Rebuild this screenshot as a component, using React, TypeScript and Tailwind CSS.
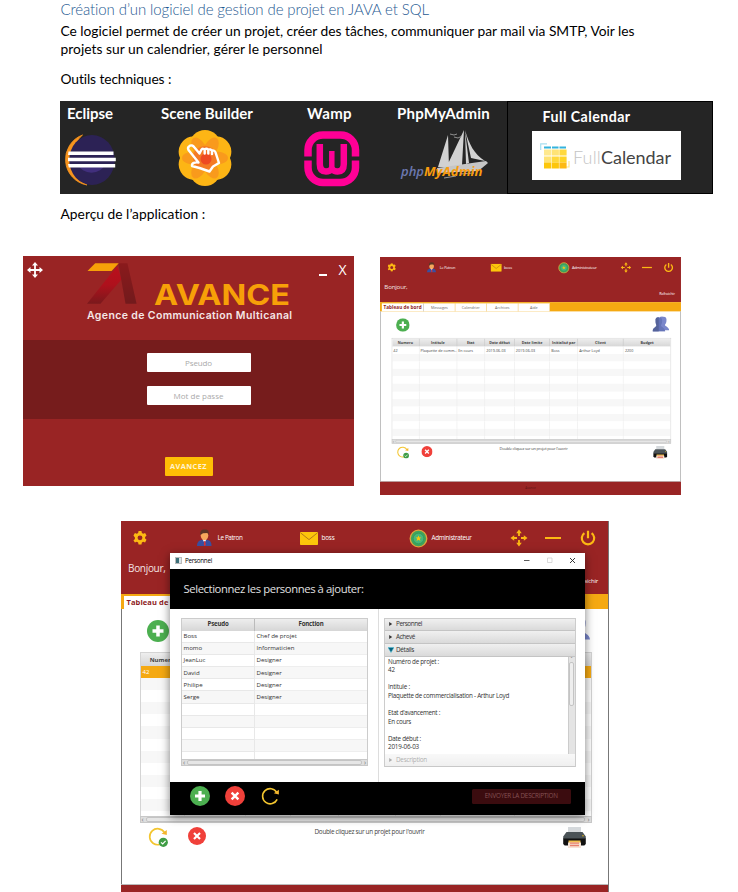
import { useLayoutEffect, useRef, useState, type ReactNode } from "react";
import clsx from "clsx";

const HUM = "font-['Lato','Liberation_Sans',sans-serif]";
const UI = "font-['Open_Sans','Noto_Sans',sans-serif]";

/* One line of text whose letter spacing is adjusted so it spans `w` pixels. */
function Fit({ w, className, children }: { w: number; className?: string; children: string }) {
  const ref = useRef<HTMLSpanElement>(null);
  const [gap, setGap] = useState(0);
  useLayoutEffect(() => {
    const el = ref.current;
    if (!el) return;
    el.style.letterSpacing = "0px";
    const natural = parseFloat(getComputedStyle(el).width);
    const next = (w - natural) / children.length;
    el.style.letterSpacing = `${next}px`;
    setGap(next);
  }, [w, children]);
  return (
    <span ref={ref} className={clsx("inline-block whitespace-nowrap leading-none", className)} style={{ letterSpacing: `${gap}px` }}>
      {children}
    </span>
  );
}

function Eclipse() {
  return (
    <svg width="52" height="52" viewBox="0 0 52 52">
      <path d="M17.500 1A26 26 0 0 0 22 51A31 31 0 0 1 17.500 1Z" fill="#f7941e" stroke="#f7941e" strokeWidth=".8" />
      <ellipse cx="27" cy="26" rx="22.800" ry="25" fill="#2c2255" />
      <path d="M13 30h27a14 12 0 0 1-27 0Z" fill="#412f7d" />
      <path d="M3.500 17.600h45v3.400H3zM3 23.800h47.800v3.400H3zM3 30h47.200v3.400H3.800z" fill="#fff" />
    </svg>
  );
}

function SceneBuilder() {
  const petals = [0, 60, 120, 180, 240, 300];
  return (
    <svg width="56" height="56" viewBox="0 0 56 56">
      {petals.map((a) => (
        <circle key={a} cx="28" cy="15.500" r="15.500" fill="#fdb515" transform={`rotate(${a} 28 28)`} />
      ))}
      {petals.map((a) => (
        <ellipse key={a} cx="28" cy="16.500" rx="6.500" ry="11.500" fill="#f7941e" opacity=".8" transform={`rotate(${a + 30} 28 28)`} />
      ))}
      <circle cx="28" cy="28" r="12" fill="#f47a25" />
      <circle cx="29" cy="29" r="5.500" fill="#ee4a23" />
      <path
        d="M12 16.500c2-2 4-1 5.500 1l5 6 2-4c1-1 2.500-.8 3.200 0 1-1 3-1 3.600.3 1.200-.8 3-.3 3.700.9 1.500-.6 3 .2 3.500 1.600L42 33l-6 3.500-3.500 5-10-3.500-7.500-2c-.5-3 3-4 6.500-3.500L11.500 20c-.8-1.500-.5-2.700.5-3.500ZM27.700 19.500v4M31.300 20v3.500M35 21v3"
        fill="none"
        stroke="#fff"
        strokeWidth="2.400"
        strokeLinejoin="round"
        strokeLinecap="round"
      />
    </svg>
  );
}

function Wamp() {
  return (
    <svg width="56" height="56" viewBox="0 0 56 56">
      <rect x="4" y="4" width="47.500" height="47.500" rx="15" fill="none" stroke="#ff0096" strokeWidth="7.500" />
      <path d="M0 25.500h9v4H0zM46 25.500h10v4H46z" fill="#252525" />
      <path d="M15.800 13v20c0 6 3 7.500 6.200 7.500 2.400 0 4.400-.8 5.800-2.500 1.400 1.700 3.400 2.500 5.800 2.500 3.200 0 6.200-1.500 6.200-7.500V13" fill="none" stroke="#ff0096" strokeWidth="6.500" />
      <path d="M27.800 20v19" stroke="#ff0096" strokeWidth="5.500" />
    </svg>
  );
}

function PhpMyAdmin() {
  return (
    <svg width="90" height="56" viewBox="0 0 90 56">
      <path d="M48 10L38 42h11zM64 5L46 43l16-3zM65 6l1 33 3-1zM65 5c4 14 9 24 20 31l-14-3z" fill="#d2d2d2" />
      <path d="M37 43l49-7 2 2-6 5-4 3-40 2z" fill="#c6c6c6" />
      <path d="M50 9l4 1 3-1M54 12l4 1 4-2" stroke="#aaa" fill="none" strokeWidth=".8" />
      <path d="M60 49l14-1M44 53l12-2" stroke="#999" strokeWidth="1" />
      <text x="1" y="50.500" textLength="23" lengthAdjust="spacingAndGlyphs" fontFamily="Open Sans" fontSize="13" fontStyle="italic" fontWeight="600" fill="#6c78af">php</text>
      <text x="24" y="50.500" textLength="58.500" lengthAdjust="spacingAndGlyphs" fontFamily="Open Sans" fontSize="13" fontStyle="italic" fontWeight="700" fill="#f89c0e">MyAdmin</text>
    </svg>
  );
}

function CalendarLogo() {
  const rows = [
    { y: 6, c: ["#ffe98f", "#ffe375", "#ffd93f"] },
    { y: 13, c: ["#ffe375", "#ffd83a", "#ffd426"] },
    { y: 19, c: ["#fdc70c", "#fdc60b", "#fdb913"] },
  ];
  return (
    <svg width="31" height="26" viewBox="0 0 31 26">
      <path d="M.7 7V.9H7" fill="none" stroke="#a9dff0" strokeWidth="1.200" />
      <path d="M29 18v6h-6" fill="none" stroke="#ffe48a" strokeWidth="1.200" />
      <path d="M4 3.500h7v2H4zM12 3.500h6.500v2H12zM19.500 3.500H26v2h-6.500z" fill="#35b4dd" />
      {rows.map((r) => r.c.map((c, i) => <rect key={c} x={4 + i * 7.7} y={r.y + 0.5} width="7.200" height="6" fill={c} />))}
    </svg>
  );
}

function AvanceLogo() {
  return (
    <svg width="54" height="46" viewBox="0 0 54 46">
      <defs>
        <linearGradient id="legLeft" x1="0" y1="0" x2="0" y2="1">
          <stop offset="0" stopColor="#bb0f1c" />
          <stop offset=".5" stopColor="#ae111c" />
          <stop offset="1" stopColor="#7a191c" />
        </linearGradient>
        <linearGradient id="legRight" x1="0" y1="0" x2="0" y2="1">
          <stop offset="0" stopColor="#8a1a1c" />
          <stop offset="1" stopColor="#721a1c" />
        </linearGradient>
      </defs>
      <path d="M31.500 3.500L36 17 14 42.500H0L25 11z" fill="url(#legLeft)" />
      <path d="M32.500.5H42L51.500 42.500H40z" fill="url(#legRight)" />
      <path d="M8.500.5H33L25.500 8.500H.5z" fill="#f7a008" />
    </svg>
  );
}

function Gear({ s }: { s: number }) {
  return (
    <svg width={s} height={s} viewBox="0 0 24 24" fill="#fdb913">
      <path
        fillRule="evenodd"
        d="M9.500 0h5l.7 3.300 2.300 1.300L20.700 3.500l2.500 4.300-2.500 2.300v2.800l2.500 2.300-2.500 4.300-3.200-1.100-2.300 1.300-.7 3.300h-5l-.7-3.300-2.300-1.300-3.200 1.100L.8 16.200l2.500-2.300v-2.800L.8 7.800l2.500-4.300 3.200 1.100 2.300-1.300zM12 7.500a4.200 4.200 0 1 0 0 8.400 4.200 4.200 0 0 0 0-8.400z"
      />
    </svg>
  );
}

function UserFace() {
  return (
    <svg width="15" height="17" viewBox="0 0 15 17">
      <path d="M0 17c0-4 2-5.500 4.500-6h6c2.500.5 4 2 4 6z" fill="#3a4fa0" />
      <path d="M5.500 10h4L7.500 14z" fill="#fff" />
      <path d="M7.200 12h1l.6 4-1 1-1-1z" fill="#d33" />
      <ellipse cx="7.500" cy="6.500" rx="3.800" ry="4.700" fill="#f6a85c" />
      <path d="M3.500 6C2.500 2 5 0 8 .5c3 0 4.500 2 3.500 5.500L10.500 4 6 4.200z" fill="#5d3425" />
    </svg>
  );
}

function Mail() {
  return (
    <svg width="18" height="13" viewBox="0 0 18 13">
      <rect width="18" height="13" rx=".8" fill="#fdc60b" />
      <path d="M.5.8L9 7.600 17.500.8" fill="none" stroke="#b7791a" strokeWidth="1" />
    </svg>
  );
}

function Badge() {
  return (
    <svg width="19" height="19" viewBox="0 0 19 19">
      <circle cx="9.500" cy="9.500" r="8.300" fill="#3fa45c" stroke="#e0a43c" strokeWidth="1.300" />
      <circle cx="9.500" cy="9.500" r="5.300" fill="#48b878" stroke="#2f8f58" strokeWidth=".6" />
      <path d="M9.500 6.500l.9 2h2l-1.600 1.300.6 2.100-1.900-1.200-1.900 1.200.6-2.100L6.600 8.500h2z" fill="#fdc60b" />
    </svg>
  );
}

function FourArrows() {
  return (
    <svg width="18" height="18" viewBox="0 0 18 18" fill="#fdb913" stroke="#fdb913">
      <path d="M9 .5l2.800 3.700H6.200zM9 17.500l2.800-3.700H6.200zM.5 9L4.200 6.200v5.600zM17.500 9L13.800 6.200v5.600z" stroke="none" />
      <path d="M9 3.500V7M9 11v3.600M3.500 9H7M11 9h3.600" strokeWidth="1.800" fill="none" />
    </svg>
  );
}

function Power() {
  return (
    <svg width="16" height="16" viewBox="0 0 16 16" fill="none" stroke="#fdb913" strokeWidth="2.200">
      <path d="M8 .8v7.400M4.400 3.100a6.200 6.200 0 1 0 7.200 0" />
    </svg>
  );
}

function Plus({ s }: { s: number }) {
  return (
    <svg width={s} height={s} viewBox="0 0 22 22">
      <circle cx="11" cy="11" r="11" fill="#4caf50" />
      <path d="M11 5.500v11M5.500 11h11" stroke="#fff" strokeWidth="3.500" />
    </svg>
  );
}

function Cross({ s }: { s: number }) {
  return (
    <svg width={s} height={s} viewBox="0 0 22 22">
      <circle cx="11" cy="11" r="11" fill="#f0403a" />
      <path d="M7.300 7.300l7.400 7.400M14.700 7.300l-7.400 7.400" stroke="#fff" strokeWidth="2.600" />
    </svg>
  );
}

function Reload({ s, done }: { s: number; done?: boolean }) {
  return (
    <svg width={s} height={s} viewBox="0 0 20 20" fill="none">
      <path d="M16.500 5.500A8 8 0 1 0 17 13" stroke="#f3c52f" strokeWidth="1.700" />
      <path d="M18.800 3v5l-5.300-1.300z" fill="#f3b52f" />
      {done && (
        <>
          <circle cx="15.300" cy="15.300" r="4.600" fill="#3f9d45" />
          <path d="M13 15.400l1.700 1.600 2.900-3.100" stroke="#fff" strokeWidth="1.200" />
        </>
      )}
    </svg>
  );
}

function People() {
  return (
    <svg width="27" height="25" viewBox="0 0 27 25">
      <path d="M12 1c2-1 4-1 6-.500 4 0 5 3 4.500 6.500 0 3-1 5-2.500 6.500 0 3 6.500 3 7 9H14z" fill="#7986cb" />
      <path d="M5 8c-.5-5 1-6.500 5-6.500s6 2 5.500 6.500c0 3-1 5-2 6 0 4 6.500 3.500 7 10.500H0c0-6 5.500-6 6.500-10.500C5.500 13 5 11 5 8z" fill="#6574b8" />
      <path d="M5 8c-.5-5 1-6.500 5-6.500v23H0c0-6 5.500-6 6.500-10.500C5.500 13 5 11 5 8z" fill="#55639a" />
    </svg>
  );
}

function Printer() {
  return (
    <svg width="23" height="21" viewBox="0 0 23 21">
      <path d="M5 0h13v6H5z" fill="#d5d9dc" />
      <path d="M3.500 5h16l3.300 4.500V12H.2V9.500z" fill="#4b5357" />
      <path d="M.2 11.500h22.600V17l-1.500 1.500H1.700L.2 17z" fill="#111" />
      <path d="M5.500 13.500h12V16h-12z" fill="#f2c14e" />
      <path d="M5 15.500h13V21H5z" fill="#f7e3d6" />
      <path d="M7 15.500h9v1.300H7zM7 17.800h9v1.400H7z" fill="#e8806e" />
      <circle cx="20" cy="8.700" r=".7" fill="#fdc60b" />
    </svg>
  );
}

const COLS = ["w-[44.2px]", "w-[60.9px]", "w-[45.4px]", "w-[47.9px]", "w-[57.3px]", "w-[45.3px]", "w-[73.8px]", "w-[76.7px]"];
const HEADS = ["Numero", "Intitule", "Etat", "Date début", "Date limite", "Initialisé par", "Client", "Budget"];
const VALUES = ["42", "Plaquette de comm...", "En cours", "2019-06-03", "2019-06-03", "Boss", "Arthur Loyd", "2200"];

function HScroll({ className }: { className?: string }) {
  return (
    <div className={clsx("flex items-center justify-between border border-[#c8c8c8] bg-[#dedede] px-px text-[7px] leading-none text-[#777]", className)}>
      <span>‹</span>
      <div className="mx-0.5 h-[5px] flex-1 rounded-[2px] border border-[#c4c4c4] bg-[#e6e6e6]" />
      <span>›</span>
    </div>
  );
}

/* Project list screen. With `selected`, only the first column holds text: a dialog covers the others. */
function Dashboard({ selected }: { selected?: boolean }) {
  return (
    <div className={clsx("flex h-[386px] w-[487px] flex-col bg-white text-white", UI)}>
      <header className="flex h-[73px] shrink-0 flex-col bg-[#992424]">
        <div className="flex h-[34px] items-center pl-[11.500px]">
          <Gear s={14} />
          <div className="-mt-px flex w-[103px] items-center pl-[50px]"><UserFace /></div>
          <div className="-ml-[32px] flex w-[82px]"><Fit w={25} className="text-[6.300px]">Le Patron</Fit></div>
          <Mail />
          <div className="flex w-[91px] pl-[4px]"><Fit w={13} className="text-[6.300px]">boss</Fit></div>
          <Badge />
          <div className="flex w-[82px] pl-[4px]"><Fit w={40} className="text-[6.300px]">Administrateur</Fit></div>
          <FourArrows />
          <div className="ml-[17.500px] h-[2px] w-[16px] bg-[#fdb913]" />
          <div className="ml-[18.500px]"><Power /></div>
        </div>
        <div className="flex h-[26px] pt-[8px] pl-[7px]"><Fit w={37.5} className="text-[10px] text-[#f3e3e3]">Bonjour,</Fit></div>
        <div className="-mt-[3px] flex justify-end pr-[10px]"><Fit w={25} className="text-[6px]">Rafraichir</Fit></div>
      </header>
      <nav className="flex h-[15px] shrink-0 items-end bg-[#f5a912] pl-[3px] text-[#666]">
        <div className="flex h-[13px] w-[68px] items-center justify-center border-r border-[#bbb] bg-white">
          <Fit w={62} className="text-[7.500px] font-bold text-[#8e1b22]">Tableau de bord</Fit>
        </div>
        {!selected &&
          ["Messages", "Calendrier", "Archives", "Aide"].map((t) => (
            <div key={t} className="flex h-[13px] w-[51px] items-center justify-center border-r border-[#f3ca74] bg-white text-[6px] leading-none">{t}</div>
          ))}
      </nav>
      <main className={clsx("flex flex-1 flex-col border-l text-[#444]", selected ? "border-[#777]" : "border-r border-[#999]")}>
        <div className="flex h-[43px] shrink-0 items-start justify-between pt-[11px] pr-[18px] pl-[25px]">
          <Plus s={22} />
          <div className="-mt-[3px]"><People /></div>
        </div>
        <div className="ml-[17.500px] flex h-[164px] w-[452px] shrink-0 flex-col overflow-hidden border border-b-0 border-[#d4d4d4]">
          <div className="flex h-[13px] shrink-0 bg-linear-to-b from-[#eee] to-[#d6d6d6]">
            {HEADS.map((h, i) => (
              <div key={h} className={clsx("flex shrink-0 items-center justify-center border-r border-[#c8c8c8] text-[6px] leading-none font-bold whitespace-nowrap", COLS[i])}>{selected && i > 0 ? "" : h}</div>
            ))}
          </div>
          {Array.from({ length: 13 }, (_, r) => (
            <div key={r} className={clsx("flex h-[12.100px] shrink-0", r === 0 && selected ? "bg-[#f5a912] text-white" : r % 2 ? "bg-[#f7f7f7]" : "bg-white")}>
              {COLS.map((c, i) => (
                <div key={c} className={clsx("flex shrink-0 items-center overflow-hidden border-r border-[#ececec] pl-[2px] text-[6px] leading-none whitespace-nowrap", c)}>
                  {r === 0 && !(selected && i > 0) ? VALUES[i] : ""}
                </div>
              ))}
            </div>
          ))}
        </div>
        <HScroll className="ml-[17.500px] h-[7px] w-[452px] shrink-0" />
        <div className="flex items-start pt-[4px] pl-[26px]">
          <Reload s={20} done />
          <div className="pl-[19.500px]"><Cross s={18} /></div>
          <div className="flex pt-[1.500px] pl-[109px]"><Fit w={110} className="text-[6.400px]">Double cliquez sur un projet pour l'ouvrir</Fit></div>
          <div className="pl-[138.500px]"><Printer /></div>
        </div>
      </main>
      <footer className="flex h-[23px] shrink-0 items-center justify-center border-t border-[#bbb] bg-[#992424] text-[5px] text-[#5a1515]">{selected ? "" : "Avance"}</footer>
    </div>
  );
}

const PEOPLE = [
  ["Boss", "Chef de projet"],
  ["momo", "Informaticien"],
  ["JeanLuc", "Designer"],
  ["David", "Designer"],
  ["Philipe", "Designer"],
  ["Serge", "Designer"],
];

function Fold({ label, open, faded, w }: { label: string; open?: boolean; faded?: boolean; w: number }) {
  return (
    <div className={clsx("flex h-[12.700px] shrink-0 items-center border-b border-[#c4c4c4] bg-linear-to-b from-[#f0f0f0] to-[#dadada] pl-[3px] text-[#333]", faded && "opacity-40")}>
      <svg width="6" height="6" viewBox="0 0 6 6" className="mr-[2px]">
        {open ? <path d="M0 .5h6L3 5.500z" fill="#08627c" stroke="#4fc3dc" strokeWidth=".5" /> : <path d="M1.200 1L4.200 3 1.200 5z" fill="#333" />}
      </svg>
      <Fit w={w} className="text-[6.400px]">{label}</Fit>
    </div>
  );
}

function DetailText() {
  const lines: [string, number][] = [
    ["Numéro de projet :", 51], ["42", 7], ["", 0], ["Intitule :", 22], ["Plaquette de commercialisation - Arthur Loyd", 121], ["", 0],
    ["Etat d'avancement :", 52], ["En cours", 23], ["", 0], ["Date début :", 33], ["2019-06-03", 31],
  ];
  return (
    <div className="flex flex-1 flex-col pt-[1px] pl-[3px]">
      {lines.map(([t, w], i) => (
        <div key={i} className="flex h-[8.580px] shrink-0 items-center">{t && <Fit w={w} className="text-[6.300px]">{t}</Fit>}</div>
      ))}
    </div>
  );
}

function Dialog() {
  return (
    <div className={clsx("absolute top-[31.500px] left-[49px] flex h-[262px] w-[414.500px] flex-col bg-white text-[#333] shadow-[0_2px_9px_rgba(0,0,0,0.5)]", UI)}>
      <div className="flex h-[16px] shrink-0 items-center pl-[5px]">
        <div className="flex h-[7px] w-[7px] border border-[#bbb] bg-[#dce6ea]"><div className="h-full w-[3px] bg-[#3c6f78]" /></div>
        <div className="flex w-[342px] pt-px pl-[3px]"><Fit w={27} className="text-[6.300px] text-black">Personnel</Fit></div>
        <svg width="52" height="7" viewBox="0 0 52 7" fill="none">
          <path d="M0 3.500h5.500" stroke="#333" strokeWidth=".8" />
          <path d="M23.500 1h4.500v4.500h-4.500z" stroke="#ccc" strokeWidth=".7" />
          <path d="M46 1l5 5M51 1l-5 5" stroke="#222" strokeWidth=".9" />
        </svg>
      </div>
      <div className="flex h-[40.500px] shrink-0 items-center bg-black pl-[13.500px]">
        <Fit w={180} className="text-[11.300px] text-[#e0e0e0]">Selectionnez les personnes à ajouter:</Fit>
      </div>
      <div className="flex h-[173px] shrink-0">
        <div className="flex w-[209px] flex-col border-r border-[#ddd] pt-[8.500px] pl-[11px]">
          <div className="flex h-[141.500px] w-[187px] shrink-0 flex-col overflow-hidden border border-b-0 border-[#ccc]">
            <div className="flex h-[12px] shrink-0 bg-linear-to-b from-[#eee] to-[#d6d6d6] font-bold">
              <div className="flex w-[73px] items-center justify-center border-r border-[#bbb]"><Fit w={21} className="text-[6.100px]">Pseudo</Fit></div>
              <div className="flex flex-1 items-center justify-center"><Fit w={25} className="text-[6.100px]">Fonction</Fit></div>
            </div>
            {Array.from({ length: 11 }, (_, r) => (
              <div key={r} className={clsx("flex h-[12.200px] shrink-0 text-[6.100px] leading-none", r % 2 ? "bg-[#f7f7f7]" : "bg-white")}>
                <div className="flex w-[73px] items-center border-r border-b border-[#e8e8e8] pl-[1.500px]">{PEOPLE[r]?.[0]}</div>
                <div className="flex flex-1 items-center border-b border-[#eee] pl-[1.500px]">{PEOPLE[r]?.[1]}</div>
              </div>
            ))}
          </div>
          <HScroll className="h-[7px] w-[187px] shrink-0" />
        </div>
        <div className="flex flex-1 pt-[8.500px] pr-[9px] pl-[5px]">
          <div className="flex h-[149px] flex-1 flex-col border border-[#ccc]">
            <Fold label="Personnel" w={26} />
            <Fold label="Achevé" w={19} />
            <Fold label="Détails" w={18} open />
            <div className="flex h-[97.500px] shrink-0">
              <DetailText />
              <div className="flex w-[7px] flex-col items-center border-l border-[#ccc] bg-[#e4e4e4]">
                <span className="text-[5px] leading-[5px] text-[#777]">ˆ</span>
                <div className="h-[44px] w-[4.500px] rounded-[2px] border border-[#c4c4c4] bg-[#eee]" />
              </div>
            </div>
            <Fold label="Description" w={31} faded />
          </div>
        </div>
      </div>
      <div className="flex flex-1 items-center bg-black pr-[13.500px] pb-[4px] pl-[19.500px]">
        <Plus s={20} />
        <div className="ml-[15px]"><Cross s={20} /></div>
        <div className="ml-[16px]"><Reload s={19} /></div>
        <div className="ml-auto flex h-[14.500px] w-[99.500px] items-center justify-center rounded-[1.500px] bg-[#3b0c0f]">
          <Fit w={73} className="text-[6.300px] text-[#865254]">ENVOYER LA DESCRIPTION</Fit>
        </div>
      </div>
    </div>
  );
}

function Login() {
  return (
    <div className={clsx("flex h-[230px] w-[331px] flex-col bg-[#992424]", UI)}>
      <div className="flex h-[84px] pt-[6px] pl-[4px]">
        <svg width="16" height="16" viewBox="0 0 16 16" fill="#fff">
          <path d="M8 0l3 3.500H8.900v3.600h3.600V5L16 8l-3.500 3V8.900H8.900v3.600H11L8 16l-3-3.500h2.100V8.900H3.500V11L0 8l3.500-3v2.100h3.600V3.500H5z" />
        </svg>
        <div className="ml-[44px] flex w-[205px] flex-col">
          <div className="flex h-[46px]">
            <AvanceLogo />
            <div className="flex pt-[17px] pl-[15px] font-['Inter',sans-serif]">
              <svg width="138" height="29" viewBox="0 0 138 29" className="overflow-visible">
                <text x="0" y="25.500" textLength="136" lengthAdjust="spacingAndGlyphs" fontSize="29" fontWeight="700" fill="#f7a008">AVANCE</text>
              </svg>
            </div>
          </div>
          <div className="flex pt-[3px] font-['Inter',sans-serif]"><Fit w={205.5} className="text-[10.500px] font-semibold text-[#f5e6e6]">Agence de Communication Multicanal</Fit></div>
        </div>
        <div className="mt-[12px] ml-[27px] h-[2px] w-[8px] bg-white" />
        <div className="ml-[11.500px] flex pt-[1px]"><Fit w={9.5} className="text-[14px] text-white">X</Fit></div>
      </div>
      <div className="flex h-[79px] flex-col items-center gap-[14px] bg-[#761c1c] pt-[13px] pl-[20px]">
        <div className="flex h-[19px] w-[104px] items-center justify-center rounded-[1px] bg-white"><Fit w={27} className="text-[8px] text-[#aaa]">Pseudo</Fit></div>
        <div className="flex h-[19px] w-[104px] items-center justify-center rounded-[1px] bg-white"><Fit w={50} className="text-[8px] text-[#aaa]">Mot de passe</Fit></div>
      </div>
      <div className="flex justify-center pt-[38px]">
        <div className="flex h-[19px] w-[48px] items-center justify-center rounded-[1px] bg-[#ffbd05]"><Fit w={37} className="text-[7.300px] font-bold text-[#fff3d0]">AVANCEZ</Fit></div>
      </div>
    </div>
  );
}

function Tool({ name, w, className, children }: { name: string; w: number; className: string; children: ReactNode }) {
  return (
    <div className={clsx("flex shrink-0 flex-col pt-[5px]", className)}>
      <Fit w={w} className="h-[15px] self-start text-[15px] font-bold text-white">{name}</Fit>
      {children}
    </div>
  );
}

export default function App() {
  return (
    <div className={clsx("flex h-[892px] w-[738px] flex-col overflow-hidden bg-white text-black", HUM)}>
      <section className="flex h-[101px] shrink-0 flex-col pl-[60.500px]">
        <div className="flex h-[20px] items-center"><Fit w={369} className="text-[15px] font-light text-[#1f5a92]">Création d’un logiciel de gestion de projet en JAVA et SQL</Fit></div>
        <div className="flex h-[23px] items-center"><Fit w={574} className="text-[13.800px]">Ce logiciel permet de créer un projet, créer des tâches, communiquer par mail via SMTP, Voir les</Fit></div>
        <div className="flex h-[14px] items-center"><Fit w={262} className="text-[13.800px]">projets sur un calendrier, gérer le personnel</Fit></div>
        <div className="flex h-[46px] items-center"><Fit w={111} className="text-[13.800px]">Outils techniques :</Fit></div>
      </section>

      <section className="ml-[60px] flex h-[93px] w-[653px] shrink-0">
        <div className="flex w-[447px] bg-[#252525] pl-[7px]">
          <Tool name="Eclipse" w={46} className="w-[94px]"><div className="mt-[13px] -ml-[2px]"><Eclipse /></div></Tool>
          <Tool name="Scene Builder" w={92} className="w-[146px]"><div className="mt-[9px] ml-[16px]"><SceneBuilder /></div></Tool>
          <Tool name="Wamp" w={45} className="w-[90px]"><div className="mt-[10px] -ml-[3px]"><Wamp /></div></Tool>
          <Tool name="PhpMyAdmin" w={93} className="w-[100px]"><div className="mt-[4px] ml-[3px]"><PhpMyAdmin /></div></Tool>
        </div>
        <div className="flex w-[206px] flex-col border-[1.500px] border-black bg-[#252525] pt-[8px] pl-[24px]">
          <Fit w={88} className="ml-[10.500px] self-start text-[14.200px] font-bold text-white">Full Calendar</Fit>
          <div className="mt-[7px] flex h-[49px] w-[149px] items-center bg-white pl-[8px]">
            <CalendarLogo />
            <div className="flex pt-[2px] pl-[2px]">
              <Fit w={28} className="text-[18px] font-light text-[#c4c4c4]">Full</Fit>
              <Fit w={70} className="text-[18px] text-[#444]">Calendar</Fit>
            </div>
          </div>
        </div>
      </section>

      <section className="flex h-[62px] shrink-0 pt-[13px] pl-[60.500px]"><Fit w={145} className="text-[13.800px]">Aperçu de l’application :</Fit></section>

      <section className="flex h-[265px] shrink-0 pl-[23px]">
        <Login />
        <div className="mt-px ml-[26px] h-[238px] w-[301px] overflow-hidden">
          <div className="w-[487px] origin-top-left scale-[0.618]"><Dashboard /></div>
        </div>
      </section>

      <section className="relative ml-[121px] h-[371px] w-[488px] shrink-0 overflow-hidden border-r border-[#777]">
        <Dashboard selected />
        <Dialog />
      </section>
    </div>
  );
}
